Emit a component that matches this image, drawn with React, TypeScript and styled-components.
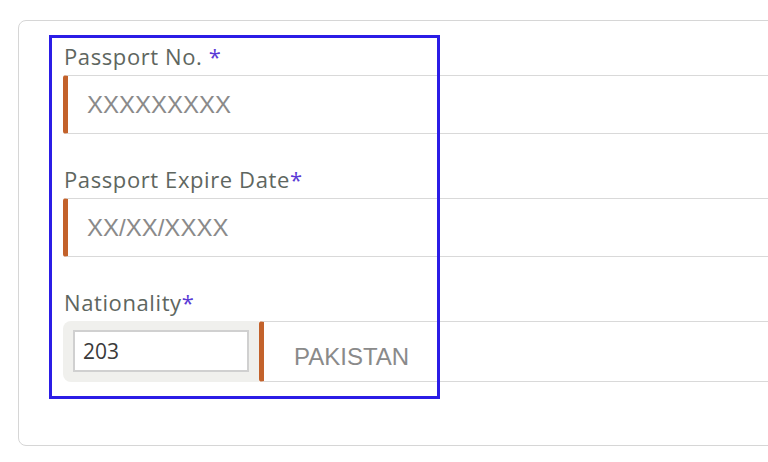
import React from 'react';
import styled, { createGlobalStyle } from 'styled-components';

const GlobalStyle = createGlobalStyle`
  html, body {
    margin: 0;
    padding: 0;
    background: #ffffff;
    overflow: hidden;
  }
`;

export default function App() {
  return (
    <>
      <GlobalStyle />
      <Viewport>
        <Card>
          <Highlight />
          <Field>
            <Label>
              Passport No. <Required>*</Required>
            </Label>
            <InputBox>
              <TextInput placeholder="XXXXXXXXX" />
            </InputBox>
          </Field>
          <Field>
            <Label>
              Passport Expire Date<Required>*</Required>
            </Label>
            <InputBox>
              <TextInput placeholder="XX/XX/XXXX" />
            </InputBox>
          </Field>
          <Field>
            <Label>
              Nationality<Required>*</Required>
            </Label>
            <NationRow>
              <CodeAddon>
                <CodeInput defaultValue="203" />
              </CodeAddon>
              <InputBox $grow $tall>
                <CountryValue>PAKISTAN</CountryValue>
              </InputBox>
            </NationRow>
          </Field>
        </Card>
      </Viewport>
    </>
  );
}

const Viewport = styled.div`
  width: 100vw;
  height: 100vh;
  overflow: hidden;
`;

const Card = styled.div`
  position: relative;
  box-sizing: border-box;
  margin: 20px 0 0 18px;
  width: 1000px;
  height: 426px;
  border: 1.5px solid #d6d6d6;
  border-radius: 8px;
  padding: 21px 0 0 44px;
  display: flex;
  flex-direction: column;
  gap: 31px;
`;

const Highlight = styled.div`
  position: absolute;
  left: 30px;
  top: 14px;
  width: 385px;
  height: 358px;
  border: 3px solid #2b1de6;
  pointer-events: none;
  z-index: 2;
`;

const Field = styled.div`
  display: flex;
  flex-direction: column;
  gap: 5px;
`;

const Label = styled.label`
  font-family: 'Open Sans', 'Noto Sans', sans-serif;
  font-size: 22px;
  line-height: 28px;
  padding-left: 1px;
  color: #5e6660;
  letter-spacing: 0.6px;
`;

const Required = styled.span`
  color: #5a3ad6;
`;

const InputBox = styled.div<{ $tall?: boolean; $grow?: boolean }>`
  box-sizing: border-box;
  flex: ${(p) => (p.$grow ? '1 1 auto' : '0 0 auto')};
  height: ${(p) => (p.$tall ? 61 : 59)}px;
  display: flex;
  align-items: center;
  border-top: 1.5px solid #d9d9d9;
  border-bottom: 1.5px solid #d9d9d9;
  border-left: 5px solid #c3622b;
  border-radius: 3px 0 0 3px;
  background: #ffffff;
`;

const TextInput = styled.input`
  border: none;
  outline: none;
  width: 100%;
  padding: 0 0 0 19px;
  font-family: 'Liberation Sans', Arial, sans-serif;
  font-size: 24px;
  color: #444;
  background: transparent;

  &::placeholder {
    color: #8a8a8a;
  }
`;

const NationRow = styled.div`
  display: flex;
  align-items: stretch;
`;

const CodeAddon = styled.div`
  box-sizing: border-box;
  width: 196px;
  height: 61px;
  padding: 9px 10px;
  background: #f0f0ed;
  border-radius: 8px 0 0 8px;
  display: flex;
`;

const CodeInput = styled.input`
  box-sizing: border-box;
  width: 100%;
  height: 42px;
  border: 2px solid #d0d0d0;
  outline: none;
  padding: 0 8px;
  font-family: 'Open Sans', 'Noto Sans', sans-serif;
  font-size: 21px;
  color: #3a3a3a;
  background: #ffffff;
`;

const CountryValue = styled.span`
  padding: 10px 0 0 30px;
  font-family: 'Liberation Sans', Arial, sans-serif;
  font-size: 24px;
  color: #8a8a8a;
`;
